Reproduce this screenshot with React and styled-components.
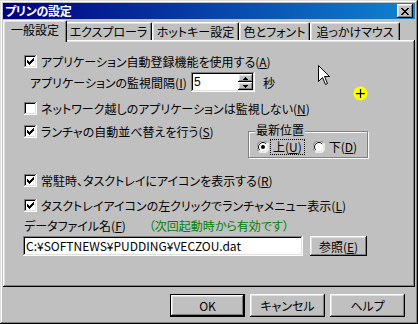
import React from 'react';
import styled, { createGlobalStyle } from 'styled-components';

const GlobalStyle = createGlobalStyle`
  html, body { margin: 0; padding: 0; background: #c0c0c0; }
  * { box-sizing: border-box; }
`;

const FONT = `"Noto Sans CJK JP", "Liberation Sans", sans-serif`;

const Window = styled.div`
  position: relative;
  width: 418px;
  height: 324px;
  padding: 3px;
  display: flex;
  flex-direction: column;
  background: #c0c0c0;
  color: #000;
  font-family: ${FONT};
  font-size: 12px;
  font-feature-settings: "palt";
  box-shadow: inset -1px -1px #000, inset 1px 1px #dfdfdf, inset -2px -2px #808080, inset 2px 2px #fff;
`;

const TitleBar = styled.div`
  height: 16px;
  display: flex;
  align-items: center;
  justify-content: space-between;
  padding: 0 2px 0 2px;
  background: linear-gradient(90deg, #000080, #1084d0);
  color: #fff;
`;

const TitleText = styled.span`
  font-weight: bold;
  line-height: 16px;
  letter-spacing: -0.3px;
`;

const bevelOut = `box-shadow: inset -1px -1px #000, inset 1px 1px #fff, inset -2px -2px #808080, inset 2px 2px #dfdfdf;`;
const bevelIn = `box-shadow: inset -1px -1px #fff, inset 1px 1px #808080, inset -2px -2px #dfdfdf, inset 2px 2px #000;`;

const CloseButton = styled.div`
  width: 16px;
  height: 14px;
  background: #c0c0c0;
  display: flex;
  align-items: center;
  justify-content: center;
  ${bevelOut}
`;

const TabStrip = styled.div`
  margin-top: 1px;
  height: 20px;
  display: flex;
  align-items: flex-end;
  padding-left: 2px;
  position: relative;
  z-index: 1;
`;

const Tab = styled.div`
  position: relative;
  width: ${p => p.$w + (p.$active ? 4 : 0)}px;
  height: ${p => (p.$active ? '22px' : '18px')};
  margin: ${p => (p.$active ? '0 -2px -2px -2px' : '0')};
  padding-bottom: ${p => (p.$active ? '4px' : '0')};
  z-index: ${p => (p.$active ? 2 : 1)};
  display: flex;
  align-items: center;
  justify-content: center;
  background: #c0c0c0;
  border-top: 1px solid #fff;
  border-left: 1px solid #fff;
  border-right: 1px solid #000;
  border-radius: 2px 2px 0 0;
  box-shadow: inset -1px 0 #808080, inset 1px 1px #dfdfdf;
  line-height: 14px;
  white-space: nowrap;
`;

const Panel = styled.div`
  height: 247px;
  padding: 11px 8px 0 21px;
  display: flex;
  flex-direction: column;
  ${bevelOut}
`;

const CheckRow = styled.label`
  height: 20px;
  margin-top: ${p => p.$mt || 0}px;
  display: flex;
  align-items: center;
  gap: 4px;
  white-space: nowrap;
`;

const CheckBox = styled.span`
  flex: none;
  width: 13px;
  height: 13px;
  background: #fff;
  display: flex;
  align-items: center;
  justify-content: center;
  ${bevelIn}
`;

const Acc = styled.u`
  text-decoration: underline;
  text-underline-offset: 1px;
`;

const IntervalRow = styled.div`
  height: 20px;
  margin-top: ${p => p.$mt || 0}px;
  padding-left: 6px;
  display: flex;
  align-items: center;
  white-space: nowrap;
`;

const IntervalLabel = styled.span`
  width: 161px;
`;

const SpinBox = styled.div`
  width: 64px;
  height: 20px;
  display: flex;
  padding: 2px;
  background: #fff;
  ${bevelIn}
`;

const SpinValue = styled.span`
  flex: 1;
  padding-left: 1px;
  line-height: 16px;
  font-family: "Liberation Sans", sans-serif;
`;

const SpinButtons = styled.div`
  width: 15px;
  display: flex;
  flex-direction: column;
`;

const SpinButton = styled.div`
  flex: 1;
  background: #c0c0c0;
  display: flex;
  align-items: center;
  justify-content: center;
  ${bevelOut}
`;

const Unit = styled.span`
  margin-left: 8px;
`;

const SortRow = styled.div`
  margin-top: ${p => p.$mt || 0}px;
  display: grid;
  grid-template-columns: 224px 120px;
  align-items: start;
`;

const GroupBox = styled.div`
  position: relative;
  margin-top: 10px;
  height: 27px;
  border: 1px solid #808080;
  box-shadow: inset 1px 1px #fff, 1px 1px #fff;
  padding: 4px 0 0 8px;
  display: flex;
  align-items: center;
  gap: 9px;
`;

const GroupTitle = styled.span`
  position: absolute;
  top: -9px;
  left: 6px;
  padding: 0 1px;
  background: #c0c0c0;
  line-height: 14px;
`;

const RadioItem = styled.span`
  display: flex;
  align-items: center;
  gap: 2px;
  white-space: nowrap;
`;

const RadioLabel = styled.span`
  padding: 1px 2px;
  line-height: 12px;
  outline: ${p => (p.$focus ? '1px dotted #000' : 'none')};
  outline-offset: 0;
`;

const DataRow = styled.div`
  height: 16px;
  margin-top: ${p => p.$mt || 0}px;
  display: flex;
  align-items: center;
  gap: 23px;
  white-space: nowrap;
`;

const Note = styled.span`
  color: #008000;
`;

const PathRow = styled.div`
  margin-top: ${p => p.$mt || 0}px;
  margin-left: -1px;
  display: flex;
  align-items: center;
  gap: 7px;
`;

const PathInput = styled.div`
  width: 280px;
  height: 20px;
  padding: 2px 3px;
  background: #fff;
  line-height: 16px;
  white-space: nowrap;
  overflow: hidden;
  ${bevelIn}
`;

const Button = styled.div`
  width: ${p => p.$w || 75}px;
  height: ${p => p.$h || 23}px;
  display: flex;
  align-items: center;
  justify-content: center;
  background: #c0c0c0;
  white-space: nowrap;
  ${p =>
    p.$default
      ? 'box-shadow: inset 0 0 0 1px #000, inset -2px -2px #000, inset 2px 2px #fff, inset -3px -3px #808080, inset 3px 3px #dfdfdf;'
      : bevelOut}
`;

const ButtonRow = styled.div`
  margin-top: 7px;
  padding-right: 10px;
  display: flex;
  justify-content: flex-end;
  gap: 5px;
`;

const Cursor = styled.svg`
  position: absolute;
  left: 318px;
  top: 65px;
`;

const Highlight = styled.svg`
  position: absolute;
  left: 353px;
  top: 86px;
`;

const Check = () => (
  <svg width="7" height="7" viewBox="0 0 7 7" shapeRendering="crispEdges">
    {[2, 3, 4, 3, 2, 1, 0].map((y, i) => (
      <rect key={i} x={i} y={y} width="1" height="3" fill="#000" />
    ))}
  </svg>
);

const CloseGlyph = () => (
  <svg width="8" height="7" viewBox="0 0 8 7" shapeRendering="crispEdges">
    {[
      [0, 0], [6, 0], [1, 1], [5, 1], [2, 2], [4, 2], [3, 3], [2, 4], [4, 4], [1, 5], [5, 5], [0, 6], [6, 6],
    ].map(([x, y], i) => (
      <rect key={i} x={x} y={y} width="2" height="1" fill="#000" />
    ))}
  </svg>
);

const Arrow = ({ down }) => (
  <svg width="5" height="3" viewBox="0 0 5 3" shapeRendering="crispEdges">
    {down ? (
      <>
        <rect x="0" y="0" width="5" height="1" fill="#000" />
        <rect x="1" y="1" width="3" height="1" fill="#000" />
        <rect x="2" y="2" width="1" height="1" fill="#000" />
      </>
    ) : (
      <>
        <rect x="2" y="0" width="1" height="1" fill="#000" />
        <rect x="1" y="1" width="3" height="1" fill="#000" />
        <rect x="0" y="2" width="5" height="1" fill="#000" />
      </>
    )}
  </svg>
);

const Radio = ({ checked }) => (
  <svg width="12" height="12" viewBox="0 0 12 12">
    <circle cx="6" cy="6" r="5.5" fill="#fff" />
    <path d="M1.6 10.4 A5.5 5.5 0 0 1 10.4 1.6" fill="none" stroke="#808080" strokeWidth="1" />
    <path d="M10.4 1.6 A5.5 5.5 0 0 1 1.6 10.4" fill="none" stroke="#fff" strokeWidth="1" />
    <path d="M2.8 9.2 A4.5 4.5 0 0 1 9.2 2.8" fill="none" stroke="#000" strokeWidth="1" />
    <path d="M9.2 2.8 A4.5 4.5 0 0 1 2.8 9.2" fill="none" stroke="#dfdfdf" strokeWidth="1" />
    {checked && <circle cx="6" cy="6" r="2" fill="#000" />}
  </svg>
);

const CheckItem = ({ checked, children, mt }) => (
  <CheckRow $mt={mt}>
    <CheckBox>{checked && <Check />}</CheckBox>
    <span>{children}</span>
  </CheckRow>
);

const TABS = [
  { label: '一般設定', w: 60 },
  { label: 'エクスプローラ', w: 87 },
  { label: 'ホットキー設定', w: 87 },
  { label: '色とフォント', w: 71 },
  { label: '追っかけマウス', w: 90 },
];

export default function App() {
  return (
    <>
      <GlobalStyle />
      <Window>
        <TitleBar>
          <TitleText>プリンの設定</TitleText>
          <CloseButton>
            <CloseGlyph />
          </CloseButton>
        </TitleBar>

        <TabStrip>
          {TABS.map((t, i) => (
            <Tab key={t.label} $w={t.w} $active={i === 0}>
              {t.label}
            </Tab>
          ))}
        </TabStrip>

        <Panel>
          <CheckItem checked>
            アプリケーション自動登録機能を使用する(<Acc>A</Acc>)
          </CheckItem>

          <IntervalRow $mt={1}>
            <IntervalLabel>
              アプリケーションの監視間隔(<Acc>I</Acc>)
            </IntervalLabel>
            <SpinBox>
              <SpinValue>5</SpinValue>
              <SpinButtons>
                <SpinButton>
                  <Arrow />
                </SpinButton>
                <SpinButton>
                  <Arrow down />
                </SpinButton>
              </SpinButtons>
            </SpinBox>
            <Unit>秒</Unit>
          </IntervalRow>

          <CheckItem mt={6}>
            ネットワーク越しのアプリケーションは監視しない(<Acc>N</Acc>)
          </CheckItem>

          <SortRow $mt={3}>
            <CheckItem checked>
              ランチャの自動並べ替えを行う(<Acc>S</Acc>)
            </CheckItem>
            <GroupBox>
              <GroupTitle>最新位置</GroupTitle>
              <RadioItem>
                <Radio checked />
                <RadioLabel $focus>
                  上(<Acc>U</Acc>)
                </RadioLabel>
              </RadioItem>
              <RadioItem>
                <Radio />
                <RadioLabel>
                  下(<Acc>D</Acc>)
                </RadioLabel>
              </RadioItem>
            </GroupBox>
          </SortRow>

          <CheckItem checked mt={12}>
            常駐時、タスクトレイにアイコンを表示する(<Acc>R</Acc>)
          </CheckItem>

          <CheckItem checked mt={5}>
            タスクトレイアイコンの左クリックでランチャメニュー表示(<Acc>L</Acc>)
          </CheckItem>

          <DataRow $mt={2}>
            <span>
              データファイル名(<Acc>F</Acc>)
            </span>
            <Note>（次回起動時から有効です）</Note>
          </DataRow>

          <PathRow $mt={3}>
            <PathInput>C:¥SOFTNEWS¥PUDDING¥VECZOU.dat</PathInput>
            <Button $w={57} $h={20}>
              参照(<Acc>E</Acc>)
            </Button>
          </PathRow>
        </Panel>

        <ButtonRow>
          <Button $default>OK</Button>
          <Button>キャンセル</Button>
          <Button>ヘルプ</Button>
        </ButtonRow>

        <Cursor width="13" height="21" viewBox="0 0 13 21" shapeRendering="crispEdges">
          <path
            d="M0.5 0.5 V16.5 L4.5 12.5 L7.5 19.5 L9.5 18.5 L6.5 11.5 H11.5 Z"
            fill="#fff"
            stroke="#000"
            strokeWidth="1"
            shapeRendering="auto"
          />
        </Cursor>
        <Highlight width="15" height="15" viewBox="0 0 15 15">
          <circle cx="7.5" cy="7.5" r="7" fill="#ffff00" />
          <rect x="3" y="7" width="9" height="1.2" fill="#000" />
          <rect x="6.9" y="3" width="1.2" height="9" fill="#000" />
        </Highlight>
      </Window>
    </>
  );
}
